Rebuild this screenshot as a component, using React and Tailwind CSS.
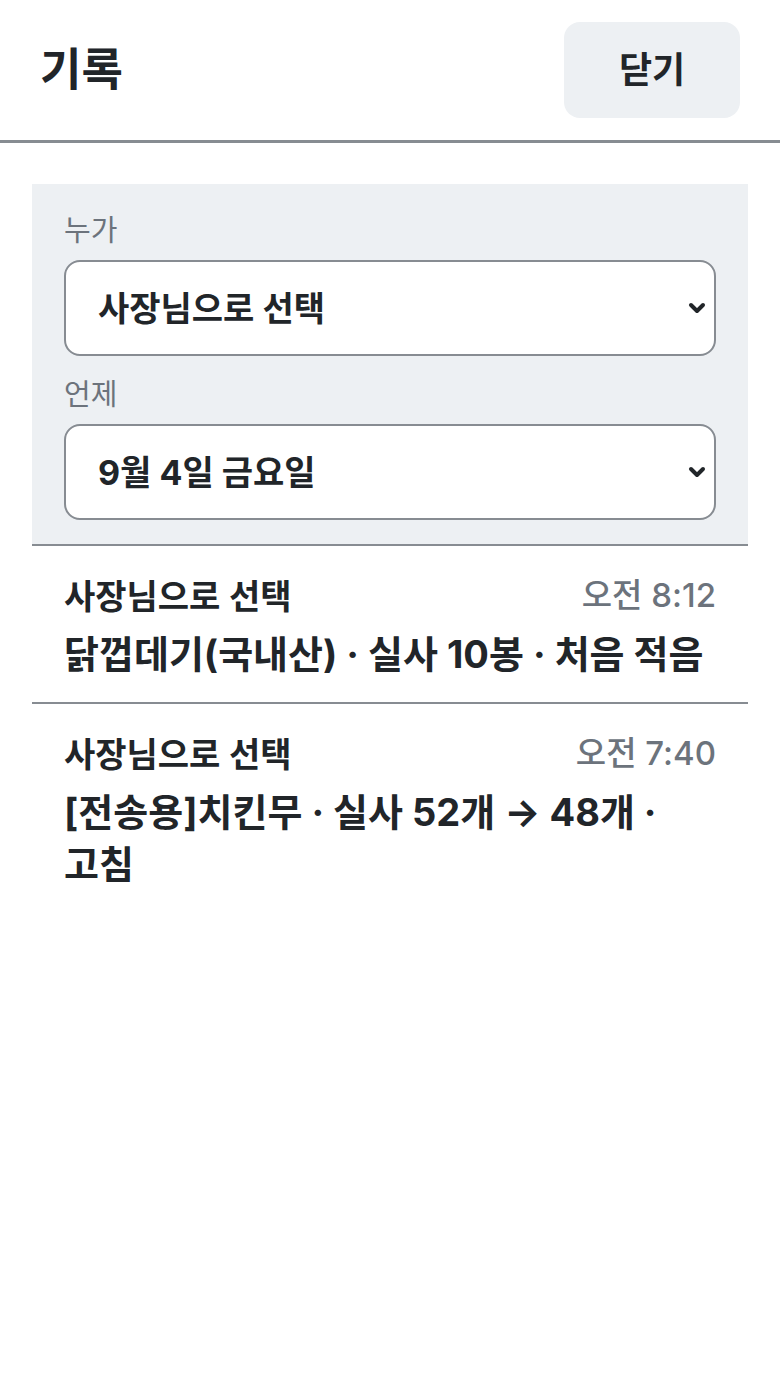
import { ChevronDown } from "lucide-react";

const font = { fontFamily: 'Inter, "Noto Sans CJK KR", sans-serif' };

const logs = [
  {
    who: "사장님으로 선택",
    time: "오전 8:12",
    text: "닭껍데기(국내산) · 실사 10봉 · 처음 적음",
  },
  {
    who: "사장님으로 선택",
    time: "오전 7:40",
    text: "[전송용]치킨무 · 실사 52개 → 48개 · 고침",
  },
];

function Field({ label, value }) {
  return (
    <div>
      <div className="text-[29px] leading-[36px] text-[#6c737c] mb-[11px]">{label}</div>
      <div className="relative">
        <select
          className="appearance-none w-full h-[96px] rounded-2xl border-2 border-[#878c92] bg-white pl-[32px] pr-16 text-[34px] font-bold text-[#212529] outline-none"
          style={font}
          defaultValue={value}
        >
          <option>{value}</option>
        </select>
        <ChevronDown
          className="absolute right-[7px] top-1/2 -translate-y-1/2 w-[24px] h-[24px] text-[#212529] pointer-events-none"
          strokeWidth={4}
        />
      </div>
    </div>
  );
}

export default function App() {
  return (
    <div className="bg-white min-h-[1400px] text-[#212529]" style={font}>
      <div className="h-[143px] flex items-center justify-between px-10 border-b-[3px] border-[#878c92]">
        <h1 className="text-[45px] font-bold">기록</h1>
        <button className="w-[176px] h-[96px] rounded-2xl bg-[#edf0f3] text-[36px] font-bold">
          닫기
        </button>
      </div>

      <div className="px-8 pt-[41px]">
        <div className="bg-[#edf0f3] px-8 pt-[29px] pb-6 border-b-2 border-[#878c92] flex flex-col gap-[21px]">
          <Field label="누가" value="사장님으로 선택" />
          <Field label="언제" value="9월 4일 금요일" />
        </div>

        {logs.map((log, i) => (
          <div key={i} className="px-8 pt-[30px] pb-[22px] border-b-2 border-[#878c92] last:border-b-0">
            <div className="flex items-center justify-between h-[40px] mb-3">
              <span className="text-[34px] font-semibold">{log.who}</span>
              <span className="text-[33px] font-medium text-[#6c737c]">{log.time}</span>
            </div>
            <div className="text-[38px] leading-[52px] font-bold break-keep">{log.text}</div>
          </div>
        ))}
      </div>
    </div>
  );
}
